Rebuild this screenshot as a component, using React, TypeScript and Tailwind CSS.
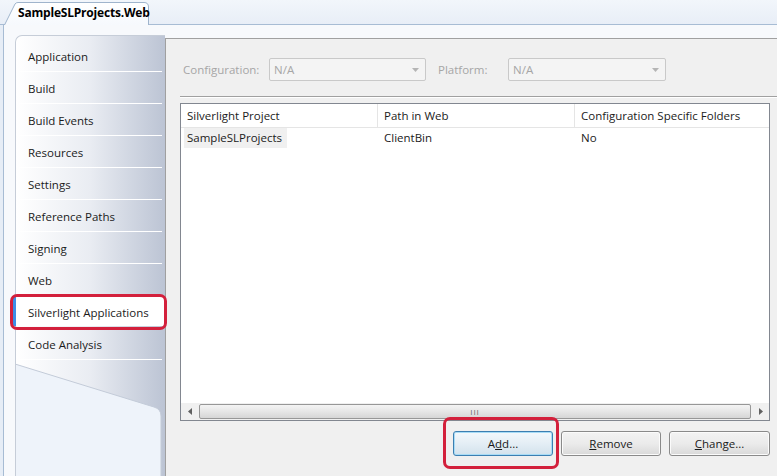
import React from "react";

const items = [
  "Application",
  "Build",
  "Build Events",
  "Resources",
  "Settings",
  "Reference Paths",
  "Signing",
  "Web",
  "Silverlight Applications",
  "Code Analysis",
];

function Combo({ w }: { w: string }) {
  return (
    <div
      className={`${w} h-[23px] border border-[#c9c9c9] rounded-[2px] bg-[#f4f4f4] flex items-center justify-between pl-[4px] pr-[6px] text-[#a6a6a6]`}
    >
      <span>N/A</span>
      <svg width="7" height="4" viewBox="0 0 7 4">
        <path d="M0 0 L7 0 L3.5 4 Z" fill="#b5b5b5" />
      </svg>
    </div>
  );
}

function Btn({ children, focus, w }: { children: React.ReactNode; focus?: boolean; w: string }) {
  return (
    <div
      className={`${w} h-[25px] rounded-[3px] border flex items-center justify-center text-[#1a1a1a] ${
        focus
          ? "border-[#3c7fb1] shadow-[inset_0_0_0_1px_#a8dcf6] bg-gradient-to-b from-[#f4f9fc] via-[#e4eef5] to-[#d3e2ec]"
          : "border-[#8a8a8a] shadow-[inset_0_0_0_1px_#fbfbfb] bg-gradient-to-b from-[#f3f3f3] via-[#ebebeb] to-[#d9d9d9]"
      }`}
    >
      {children}
    </div>
  );
}

export default function App() {
  return (
    <div
      className="w-[777px] h-[476px] overflow-hidden bg-[#e6edf6] flex flex-col text-[11.5px] text-[#1b1b1b] relative"
      style={{ fontFamily: '"Open Sans", "Noto Sans", sans-serif' }}
    >
      {/* tab strip */}
      <div className="h-[25px] shrink-0 flex items-end pl-[4px] border-b border-[#a7bcd4] bg-gradient-to-b from-[#f2f6fb] to-[#e8eef7]">
        <div className="relative w-[145px] h-[23px] -mb-px">
          <svg className="absolute inset-0" width="145" height="23" viewBox="0 0 145 23">
            <defs>
              <linearGradient id="tabg" x1="0" y1="0" x2="0" y2="1">
                <stop offset="0" stopColor="#ffffff" />
                <stop offset="1" stopColor="#f6f9fd" />
              </linearGradient>
            </defs>
            <path
              d="M0.5 23 L11 2 Q12 0.5 14 0.5 L140 0.5 Q144.5 0.5 144.5 5 L144.5 23"
              fill="url(#tabg)"
              stroke="#9fb4cc"
            />
          </svg>
          <span className="relative block pl-[14px] pt-[3px] font-bold text-[12px] leading-[16px] text-black tracking-[-0.2px]">
            SampleSLProjects.Web
          </span>
        </div>
      </div>

      {/* frame */}
      <div className="flex-1 ml-[3px] border-l border-[#a7bcd4] bg-[#f7f9fc] flex pt-[10px] pl-[11px]">
        {/* sidebar */}
        <div className="w-[150px] flex flex-col bg-gradient-to-r from-white via-[#e9ecf2] to-[#bcc4d4] rounded-tl-[7px] border-t border-l border-[#c6cdd8] relative">
          <div className="h-[4px]" />
          {items.map((it) => {
            const sel = it === "Silverlight Applications";
            return (
              <div key={it} className="flex flex-col">
                {sel ? (
                  <div className="h-[31px] -ml-[3px] flex items-stretch">
                    <div className="w-[3px] my-[1px] bg-[#3d8ee6] rounded-l-[1px]" />
                    <div className="flex-1 bg-white flex items-center pl-[12px] pt-[2px] my-[1px]">{it}</div>
                  </div>
                ) : (
                  <div className="h-[31px] flex items-center pl-[12px] pt-[2px]">{it}</div>
                )}
                <div className="h-px mx-[3px] bg-white" />
              </div>
            );
          })}
          <div className="flex-1 relative">
            <svg className="absolute inset-0" width="150" height="120" viewBox="0 0 150 120" preserveAspectRatio="none">
              <path
                d="M-1 4 L138 47 Q145 49 145 56 L145 120 L-1 120 Z"
                fill="#eef3fa"
                stroke="#c3cbd8"
                strokeWidth="1"
              />
            </svg>
          </div>
        </div>

        {/* main panel */}
        <div className="flex-1 mt-[3px] border-l border-t border-[#a0a0a0] bg-[#f0f0f0] flex flex-col pl-[14px] pr-[7px]">
          <div className="h-[19px]" />
          <div className="flex items-center h-[23px] text-[#a6a6a6]">
            <span className="w-[89px] pl-[3px] pt-[1px]">Configuration:</span>
            <Combo w="w-[157px]" />
            <span className="ml-[12px] w-[70px] pt-[1px]">Platform:</span>
            <Combo w="w-[158px]" />
          </div>
          <div className="mt-[15px] -mr-[7px] border-t border-[#a0a0a0] border-b border-b-white" />
          <div className="mt-[5px] h-[318px] border border-[#828790] bg-white flex flex-col">
            <div className="h-[24px] flex border-b border-[#e5e5e5] text-[#1b1b1b]">
              <div className="w-[197px] pl-[6px] pt-[1px] flex items-center border-r border-[#e5e5e5]">Silverlight Project</div>
              <div className="w-[197px] pl-[6px] pt-[1px] flex items-center border-r border-[#e5e5e5]">Path in Web</div>
              <div className="flex-1 pl-[6px] pt-[1px] flex items-center">Configuration Specific Folders</div>
            </div>
            <div className="h-[20px] flex items-center">
              <div className="w-[197px] pl-[3px] flex">
                <span className="bg-[#f0f0f0] px-[3px] h-[20px] w-[103px] flex items-center">SampleSLProjects</span>
              </div>
              <div className="w-[197px] pl-[6px]">ClientBin</div>
              <div className="flex-1 pl-[6px]">No</div>
            </div>
            <div className="flex-1" />
            <div className="h-[17px] flex items-stretch bg-[#f0f0f0]">
              <div className="w-[17px] flex items-center justify-center">
                <svg width="4" height="7" viewBox="0 0 4 7">
                  <path d="M4 0 L4 7 L0 3.5 Z" fill="#606060" />
                </svg>
              </div>
              <div className="flex-1 my-[1px] mx-[1px] rounded-[2px] border border-[#979797] bg-gradient-to-b from-[#f4f4f4] via-[#e6e6e6] to-[#d6d6d6] flex items-center justify-center">
                <span className="text-[8px] leading-[8px] text-[#6a6a6a] tracking-[1px]">III</span>
              </div>
              <div className="w-[17px] flex items-center justify-center">
                <svg width="4" height="7" viewBox="0 0 4 7">
                  <path d="M0 0 L0 7 L4 3.5 Z" fill="#606060" />
                </svg>
              </div>
            </div>
          </div>
          <div className="mt-[10px] flex justify-end gap-[8px]">
            <Btn w="w-[100px]" focus>
              <span>A<u>d</u>d...</span>
            </Btn>
            <Btn w="w-[100px]">
              <span><u>R</u>emove</span>
            </Btn>
            <Btn w="w-[101px]">
              <span><u>C</u>hange...</span>
            </Btn>
          </div>
        </div>
      </div>

      {/* annotations */}
      <div className="absolute left-[10px] top-[294px] w-[157px] h-[36px] border-[3px] border-[#d3203c] rounded-[7px] pointer-events-none" />
      <div className="absolute left-[443px] top-[417px] w-[116px] h-[52px] border-[3px] border-[#d3203c] rounded-[7px] pointer-events-none" />
    </div>
  );
}
